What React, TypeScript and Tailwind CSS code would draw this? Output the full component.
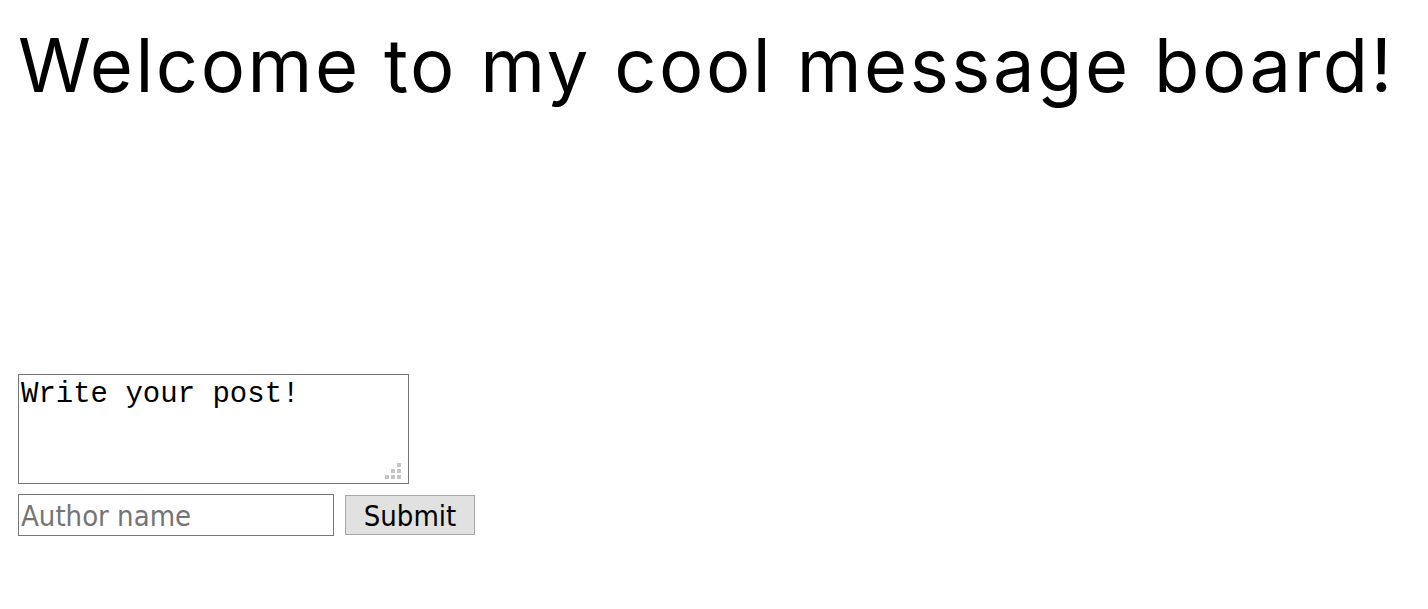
export default function App() {
  return (
    <div className="min-h-[609px] bg-white px-[18px] pt-[15px]">
      <h1
        className="text-[74px] leading-[100px] text-black font-normal whitespace-nowrap tracking-[2.55px]"
        style={{ fontFamily: 'Inter, "Noto Sans", sans-serif' }}
      >
        Welcome to my cool message board!
      </h1>
      <div className="h-[259px]" />
      <div className="flex flex-col items-start">
        <div className="relative">
          <textarea
            className="block w-[391px] h-[110px] border border-[#767676] bg-white px-[2px] pt-[2px] text-[29px] leading-[36px] text-black outline-none resize-none"
            style={{ fontFamily: '"Liberation Mono", monospace' }}
            defaultValue="Write your post!"
          />
          <div className="pointer-events-none absolute right-[8px] bottom-[5px] grid grid-cols-3 gap-[2px]">
            <span className="h-[4px] w-[4px]" />
            <span className="h-[4px] w-[4px]" />
            <span className="h-[4px] w-[4px] bg-[#c4c4c4]" />
            <span className="h-[4px] w-[4px]" />
            <span className="h-[4px] w-[4px] bg-[#c4c4c4]" />
            <span className="h-[4px] w-[4px] bg-[#c4c4c4]" />
            <span className="h-[4px] w-[4px] bg-[#c4c4c4]" />
            <span className="h-[4px] w-[4px] bg-[#c4c4c4]" />
            <span className="h-[4px] w-[4px] bg-[#c4c4c4]" />
          </div>
        </div>
        <div className="mt-[10px] flex items-center">
          <input
            type="text"
            placeholder="Author name"
            className="block w-[316px] h-[42px] border border-[#767676] bg-white px-[2px] pt-[4px] text-[29px] text-black placeholder:text-[#757575] outline-none"
            style={{ fontFamily: '"DejaVu Sans Condensed", "DejaVu Sans", sans-serif' }}
          />
          <button
            className="ml-[11px] h-[40px] w-[130px] border border-[#a8a8a8] bg-[#e1e1e1] pt-[2px] text-[29px] text-black leading-none"
            style={{ fontFamily: '"DejaVu Sans Condensed", "DejaVu Sans", sans-serif' }}
          >
            Submit
          </button>
        </div>
      </div>
    </div>
  );
}
